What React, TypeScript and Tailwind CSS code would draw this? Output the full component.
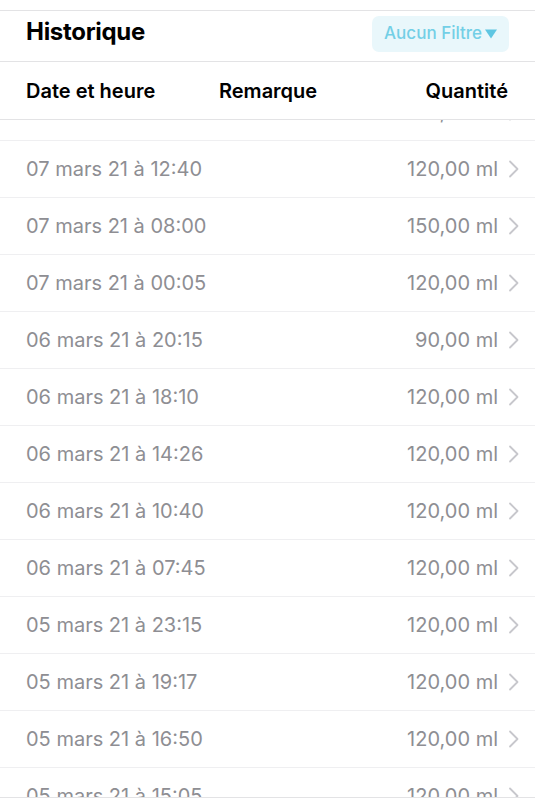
const rows = [
  ['07 mars 21 à 12:40', '120,00 ml'],
  ['07 mars 21 à 08:00', '150,00 ml'],
  ['07 mars 21 à 00:05', '120,00 ml'],
  ['06 mars 21 à 20:15', '90,00 ml'],
  ['06 mars 21 à 18:10', '120,00 ml'],
  ['06 mars 21 à 14:26', '120,00 ml'],
  ['06 mars 21 à 10:40', '120,00 ml'],
  ['06 mars 21 à 07:45', '120,00 ml'],
  ['05 mars 21 à 23:15', '120,00 ml'],
  ['05 mars 21 à 19:17', '120,00 ml'],
  ['05 mars 21 à 16:50', '120,00 ml'],
  ['05 mars 21 à 15:05', '120,00 ml'],
]

function Chevron() {
  return (
    <svg width="12" height="18" viewBox="0 0 12 18" className="ml-[10px] shrink-0">
      <path d="M2 1.5 L9.5 9 L2 16.5" fill="none" stroke="#c7c7cc" strokeWidth="1.8" strokeLinecap="round" strokeLinejoin="round" />
    </svg>
  )
}

function Row({ date, qty }: { date: string; qty: string }) {
  return (
    <div className="h-[57px] shrink-0 flex items-center border-b border-[#efeff1] pl-[26px] pr-[15px]">
      <span className="flex-1 text-[20px] text-[#8e8e93]">{date}</span>
      <span className="text-[20px] text-[#8e8e93]">{qty}</span>
      <Chevron />
    </div>
  )
}

export default function App() {
  return (
    <main
      className="w-[535px] h-[800px] bg-white overflow-hidden flex flex-col"
      style={{ fontFamily: 'Inter, "Noto Sans", sans-serif' }}
    >
      <div className="h-[11px] shrink-0 border-b border-[#e3e3e5]" />
      <div className="h-[51px] shrink-0 flex items-start justify-between pl-[26px] pr-[26px] border-b border-[#e3e3e5]">
        <h1 className="mt-[6px] text-[24px] leading-[30px] font-bold text-black tracking-[-0.3px]">Historique</h1>
        <button className="mt-[5px] h-[36px] px-[12px] rounded-[7px] bg-[#e9f7fb] text-[#73cfe6] text-[17px] font-medium flex items-center gap-[3px]">
          Aucun Filtre
          <svg width="12" height="10" viewBox="0 0 12 10">
            <path d="M0 0.5 H12 L6 9.5 Z" fill="#5ec6e2" />
          </svg>
        </button>
      </div>
      <div className="h-[58px] shrink-0 flex items-center pl-[26px] pr-[27px] border-b border-[#e3e3e5] text-[20px] font-semibold text-black">
        <span className="w-[193px]">Date et heure</span>
        <span className="flex-1">Remarque</span>
        <span>Quantité</span>
      </div>
      <div className="flex-1 overflow-hidden flex flex-col">
        <div className="h-[21px] shrink-0 overflow-hidden border-b border-[#efeff1]">
          <div className="-mt-[36px]">
            <Row date="07 mars 21 à 15:10" qty="120,00 ml" />
          </div>
        </div>
        {rows.map(([d, q]) => (
          <Row key={d} date={d} qty={q} />
        ))}
      </div>
      <div className="h-[3px] shrink-0 border-t border-[#e3e3e5]" />
    </main>
  )
}
